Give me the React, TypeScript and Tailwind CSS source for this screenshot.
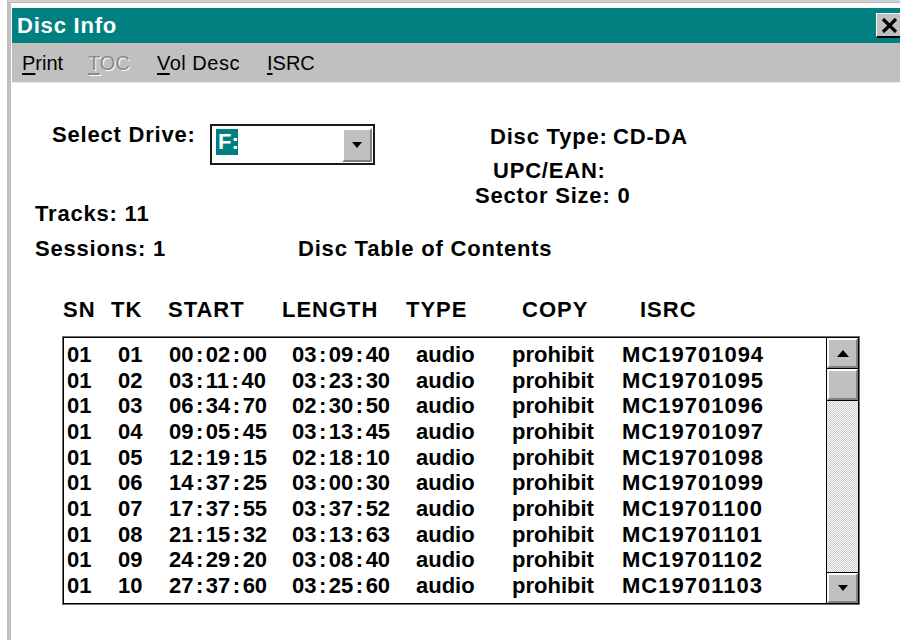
import React from "react";

type Row = [string, string, string, string, string, string, string];

const tracks: Row[] = [
  ["01", "01", "00:02:00", "03:09:40", "audio", "prohibit", "MC19701094"],
  ["01", "02", "03:11:40", "03:23:30", "audio", "prohibit", "MC19701095"],
  ["01", "03", "06:34:70", "02:30:50", "audio", "prohibit", "MC19701096"],
  ["01", "04", "09:05:45", "03:13:45", "audio", "prohibit", "MC19701097"],
  ["01", "05", "12:19:15", "02:18:10", "audio", "prohibit", "MC19701098"],
  ["01", "06", "14:37:25", "03:00:30", "audio", "prohibit", "MC19701099"],
  ["01", "07", "17:37:55", "03:37:52", "audio", "prohibit", "MC19701100"],
  ["01", "08", "21:15:32", "03:13:63", "audio", "prohibit", "MC19701101"],
  ["01", "09", "24:29:20", "03:08:40", "audio", "prohibit", "MC19701102"],
  ["01", "10", "27:37:60", "03:25:60", "audio", "prohibit", "MC19701103"],
];

// MSF time with the wide colons of the system font
function Msf({ value }: { value: string }) {
  const parts = value.split(":");
  return (
    <span>
      {parts.map((p, i) => (
        <React.Fragment key={i}>
          {i > 0 && <span className="px-[2.5px]">:</span>}
          {p}
        </React.Fragment>
      ))}
    </span>
  );
}

function ArrowUp() {
  return (
    <svg width="12" height="7" viewBox="0 0 12 7">
      <polygon points="6,0 12,7 0,7" fill="#000" />
    </svg>
  );
}

function ArrowDown() {
  return (
    <svg width="10" height="6" viewBox="0 0 10 6">
      <polygon points="0,0 10,0 5,6" fill="#000" />
    </svg>
  );
}

function BevelButton({ className, children }: { className: string; children?: React.ReactNode }) {
  return (
    <div
      className={
        "flex items-center justify-center bg-[#c0c0c0] border-t-2 border-l-2 border-t-white border-l-white border-b-2 border-r-2 border-b-[#808080] border-r-[#808080] " +
        className
      }
    >
      {children}
    </div>
  );
}

export default function App() {
  return (
    <div className="w-[900px] h-[640px] bg-white overflow-hidden flex flex-col font-['Liberation_Sans',Arial,sans-serif] text-black">
      {/* outer frame top edge */}
      <div className="h-[3px] ml-[7px] bg-[#d0d0d0] border-b border-b-[#b8b8b8]" />
      <div className="flex-1 flex">
        <div className="w-[7px]" />
        <div className="flex-1 flex flex-col border-l-4 border-l-[#c0c0c0]">
          <div className="h-[5px]" />
          {/* title bar */}
          <div className="ml-[1px] h-[35px] bg-[#008080] flex items-center justify-between">
            <span className="pl-[5px] text-white font-bold text-[22px] leading-[22px] tracking-[0.8px]">
              Disc Info
            </span>
            <div className="w-[28px] h-[25px] mr-[-4px] bg-[#c0c0c0] border-t border-l border-t-white border-l-white border-b-2 border-b-black flex items-center justify-start pl-[4px]">
              <svg width="17" height="15" viewBox="0 0 17 15">
                <path d="M2 1 L15 14 M15 1 L2 14" stroke="#000" strokeWidth="3.2" />
              </svg>
            </div>
          </div>
          {/* menu bar */}
          <div className="ml-[1px] h-[40px] bg-[#c0c0c0] flex flex-col border-b border-b-[#e8e8e8]">
            <div className="mt-[2px] mr-[34px] border-t border-dotted border-t-[#e6a8a8]" />
            <div className="flex pl-[10px] pt-[7px] text-[20px] leading-[20px]">
              <span className="w-[66px]">
                <span className="underline underline-offset-[3px]">P</span>rint
              </span>
              <span className="w-[69px] text-[#8a8a8a] [text-shadow:1px_1px_0_#ffffff]">
                <span className="underline underline-offset-[3px]">T</span>OC
              </span>
              <span className="w-[110px] tracking-[0.5px]">
                <span className="underline underline-offset-[3px]">V</span>ol Desc
              </span>
              <span>
                <span className="underline underline-offset-[3px]">I</span>SRC
              </span>
            </div>
          </div>

          {/* dialog body */}
          <div className="flex-1 flex flex-col font-bold text-[22px] leading-[22px] tracking-[0.8px]">
            <div className="flex pt-[41px]">
              <div className="flex flex-col pl-[24px]">
                <div className="flex items-start">
                  <span className="ml-[17px] w-[158px]">Select Drive:</span>
                  <div className="w-[165px] h-[41px] border-2 border-[#1a1a1a] flex justify-between bg-white">
                    <div className="mt-[3px] ml-[4px] w-[22px] h-[26px] bg-[#008080] text-white leading-[26px] pl-[2px] tracking-normal">
                      F:
                    </div>
                    <BevelButton className="mt-[2px] mr-[1px] w-[30px] h-[34px]">
                      <ArrowDown />
                    </BevelButton>
                  </div>
                </div>
                <span className="mt-[38px]">Tracks: 11</span>
              </div>
              <div className="flex flex-col ml-[100px]">
                <div className="mt-[2px] ml-[15px] flex">
                  <span className="w-[123px]">Disc Type:</span>
                  <span>CD-DA</span>
                </div>
                <span className="mt-[12px] ml-[18px]">UPC/EAN:</span>
                <span className="mt-[3px]">Sector Size: 0</span>
              </div>
            </div>

            <div className="flex mt-[13px] pl-[24px]">
              <span className="w-[263px]">Sessions: 1</span>
              <span>Disc Table of Contents</span>
            </div>

            {/* column headings */}
            <div className="flex mt-[39px] ml-[52px] tracking-[1px]">
              <span className="w-[48px]">SN</span>
              <span className="w-[57px]">TK</span>
              <span className="w-[114px]">START</span>
              <span className="w-[124px]">LENGTH</span>
              <span className="w-[116px]">TYPE</span>
              <span className="w-[118px]">COPY</span>
              <span>ISRC</span>
            </div>

            {/* track list */}
            <div className="mt-[15px] ml-[51px] w-[798px] h-[269px] border border-[#707070]">
              <div className="w-full h-full border border-black flex">
                <div className="flex-1 bg-white border-r border-r-black pt-[4px] pl-[3px] tracking-normal">
                  {tracks.map((r, i) => (
                    <div key={i} className="flex h-[25.67px] leading-[25.67px]">
                      <span className="w-[51px]">{r[0]}</span>
                      <span className="w-[51px]">{r[1]}</span>
                      <span className="w-[123px]">
                        <Msf value={r[2]} />
                      </span>
                      <span className="w-[124px]">
                        <Msf value={r[3]} />
                      </span>
                      <span className="w-[96px]">{r[4]}</span>
                      <span className="w-[110px]">{r[5]}</span>
                      <span className="tracking-[1px]">{r[6]}</span>
                    </div>
                  ))}
                </div>
                {/* vertical scroll bar */}
                <div className="w-[31px] flex flex-col">
                  <BevelButton className="h-[30px] w-full">
                    <ArrowUp />
                  </BevelButton>
                  <div className="h-[33px] border-t border-b border-black">
                    <div className="w-full h-full bg-[#c0c0c0] border-t-2 border-l-2 border-t-white border-l-white border-b-2 border-r-2 border-b-[#808080] border-r-[#808080]" />
                  </div>
                  <div className="flex-1 bg-[repeating-conic-gradient(#c8c8c8_0%_25%,#ffffff_0%_50%)] bg-size-[2px_2px]" />
                  <div className="border-t border-black">
                    <BevelButton className="h-[30px] w-full">
                      <ArrowDown />
                    </BevelButton>
                  </div>
                </div>
              </div>
            </div>
          </div>
        </div>
      </div>
    </div>
  );
}
